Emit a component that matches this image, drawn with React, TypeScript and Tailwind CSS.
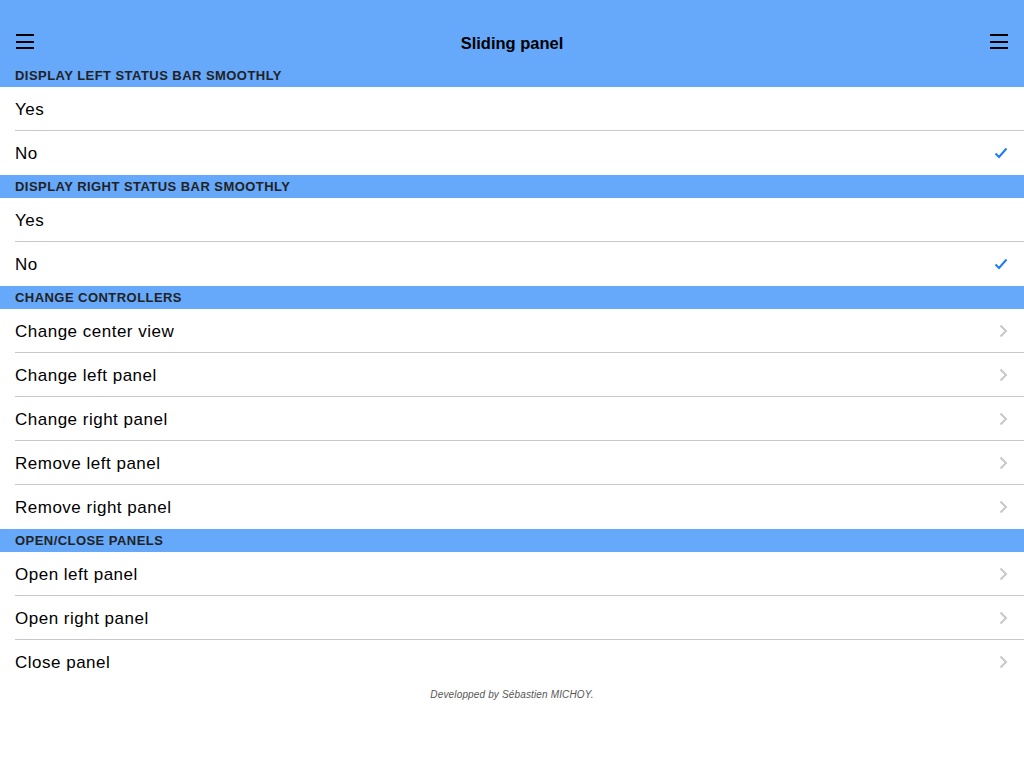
const font = { fontFamily: '"Liberation Sans", Arial, sans-serif' };

type Row = { label: string; accessory: "none" | "check" | "chevron" };
type Section = { title: string; rows: Row[] };

const sections: Section[] = [
  {
    title: "Display left status bar smoothly",
    rows: [
      { label: "Yes", accessory: "none" },
      { label: "No", accessory: "check" },
    ],
  },
  {
    title: "Display right status bar smoothly",
    rows: [
      { label: "Yes", accessory: "none" },
      { label: "No", accessory: "check" },
    ],
  },
  {
    title: "Change controllers",
    rows: [
      { label: "Change center view", accessory: "chevron" },
      { label: "Change left panel", accessory: "chevron" },
      { label: "Change right panel", accessory: "chevron" },
      { label: "Remove left panel", accessory: "chevron" },
      { label: "Remove right panel", accessory: "chevron" },
    ],
  },
  {
    title: "Open/Close panels",
    rows: [
      { label: "Open left panel", accessory: "chevron" },
      { label: "Open right panel", accessory: "chevron" },
      { label: "Close panel", accessory: "chevron" },
    ],
  },
];

function Burger() {
  return (
    <svg width="18" height="16" viewBox="0 0 18 16" className="block">
      <rect x="0" y="0" width="18" height="2" fill="#000" />
      <rect x="0" y="7" width="18" height="2" fill="#000" />
      <rect x="0" y="13" width="18" height="2" fill="#000" />
    </svg>
  );
}

function Check() {
  return (
    <svg width="14" height="12" viewBox="0 0 14 12" className="block">
      <path d="M1.5 6.5 L5 10 L12.5 1.5" fill="none" stroke="#1a7cf5" strokeWidth="2" />
    </svg>
  );
}

function Chevron() {
  return (
    <svg width="9" height="14" viewBox="0 0 9 14" className="block">
      <path d="M1.5 1.5 L7 7 L1.5 12.5" fill="none" stroke="#c7c7cc" strokeWidth="2" />
    </svg>
  );
}

export default function App() {
  return (
    <div className="w-[1024px] h-[768px] bg-white overflow-hidden" style={font}>
      <div className="bg-[#66a8fa] h-[64px] pt-[20px]">
        <div className="h-[44px] flex items-center justify-between px-[16px]">
          <Burger />
          <span className="text-[16.5px] font-bold text-black pt-[2px]">Sliding panel</span>
          <Burger />
        </div>
      </div>
      {sections.map((s) => (
        <div key={s.title}>
          <div className="bg-[#66a8fa] h-[23px] flex items-center px-[15px] text-[13px] font-bold uppercase tracking-[0.45px] text-[#222]">
            {s.title}
          </div>
          {s.rows.map((r, i) => (
            <div key={r.label} className="pl-[15px]">
              <div
                className={
                  "h-[44px] flex items-center justify-between pr-[16px] " +
                  (i < s.rows.length - 1 ? "border-b border-[#c8c7cc]" : "")
                }
              >
                <span className="text-[17px] text-black tracking-[0.5px] pt-[2px]">{r.label}</span>
                {r.accessory === "check" && <Check />}
                {r.accessory === "chevron" && <Chevron />}
              </div>
            </div>
          ))}
        </div>
      ))}
      <div className="text-center text-[10px] italic text-[#555] tracking-[0.15px] mt-[3px]">
        Developped by Sébastien MICHOY.
      </div>
    </div>
  );
}
